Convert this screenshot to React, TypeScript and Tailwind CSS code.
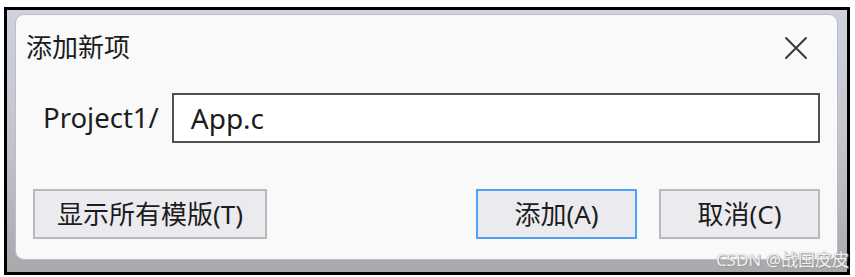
const font = { fontFamily: '"Noto Sans", "Noto Sans CJK SC", sans-serif' };

const CloseIcon = () => (
  <svg width="24" height="24" viewBox="0 0 24 24" fill="none">
    <path d="M2 2 L22 22 M22 2 L2 22" stroke="#3a3a3a" strokeWidth="2" strokeLinecap="round" />
  </svg>
);

const DialogButton = ({ label, primary, width }: { label: string; primary?: boolean; width: string }) => (
  <button
    className={
      primary
        ? `h-[50px] ${width} border-2 border-[#4ea2f8] bg-[#ebebef] text-[26px] text-[#1c1c1c]`
        : `h-[50px] ${width} border-2 border-[#b9b9b9] bg-[#ebebef] text-[26px] text-[#1c1c1c]`
    }
  >
    {label}
  </button>
);

export default function App() {
  return (
    <div className="relative h-[277px] w-[855px] overflow-hidden bg-white pl-[4px] pt-[7px]" style={font}>
      <div className="h-[268px] w-[846px] border-[3px] border-black bg-gradient-to-b from-[#cfd1dc] via-[#c4c5cc] to-[#a9a9ab] pb-[12px] pl-[8px] pr-[9px] pt-[4px]">
        <div className="flex h-full flex-col rounded-[9px] border border-[#b7bbd6] bg-[#f9f9f9]">
          <div className="flex h-[65px] items-center justify-between pl-[10px] pr-[18px]">
            <span className="text-[26px] text-[#1c1c1c]">添加新项</span>
            <span className="flex h-[40px] w-[46px] items-center justify-center">
              <CloseIcon />
            </span>
          </div>
          <div className="mt-[13px] flex items-center pl-[27px] pr-[17px]">
            <span className="text-[27.5px] text-[#1c1c1c]">Project1/</span>
            <div className="ml-[13px] flex h-[50px] flex-1 items-center border-2 border-[#505050] bg-white pl-[17px] text-[28px] text-[#1c1c1c]">
              App.c
            </div>
          </div>
          <div className="mt-[46px] flex items-center pl-[17px] pr-[17px]">
            <DialogButton label="显示所有模版(T)" width="w-[234px]" />
            <div className="flex-1" />
            <DialogButton label="添加(A)" primary width="w-[161px]" />
            <div className="w-[22px]" />
            <DialogButton label="取消(C)" width="w-[161px]" />
          </div>
        </div>
      </div>
      <span
        className="absolute bottom-[5px] right-[6px] text-[17px] text-[#f2f2f2]"
        style={{ textShadow: '0 0 1px #8a8a8a, 1px 1px 1px #9a9a9a' }}
      >
        CSDN @战国皮皮
      </span>
    </div>
  );
}
